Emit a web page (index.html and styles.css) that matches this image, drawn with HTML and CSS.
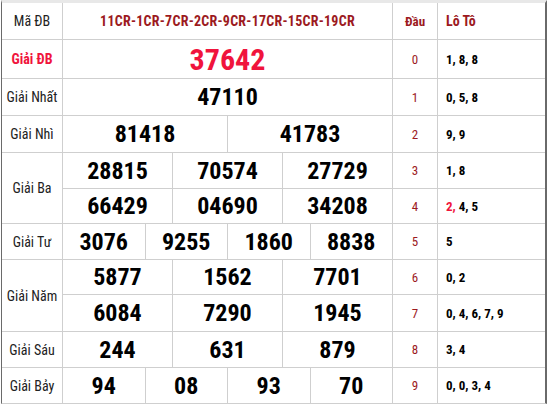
FILE: index.html
```html
<!DOCTYPE html>
<html lang="vi">

<head>
    <meta charset="utf-8">
    <meta name="viewport" content="width=device-width, initial-scale=1.0">
    <title>Kết quả xổ số</title>
    <link rel="stylesheet" href="styles.css">
</head>

<body>
    <main class="board">
        <!-- header -->
        <div class="label">Mã ĐB</div>
        <div class="code span12">11CR-1CR-7CR-2CR-9CR-17CR-15CR-19CR</div>
        <div class="head_dau">Đầu</div>
        <div class="head_loto">Lô Tô</div>

        <div class="label label_db">Giải ĐB</div>
        <div class="num num_db span12">37642</div>
        <div class="dau">0</div>
        <div class="loto">1, 8, 8</div>

        <div class="label">Giải Nhất</div>
        <div class="num span12">47110</div>
        <div class="dau">1</div>
        <div class="loto">0, 5, 8</div>

        <div class="label">Giải Nhì</div>
        <div class="num span6">81418</div>
        <div class="num span6">41783</div>
        <div class="dau">2</div>
        <div class="loto">9, 9</div>

        <div class="label rows2">Giải Ba</div>
        <div class="num span4">28815</div>
        <div class="num span4">70574</div>
        <div class="num span4">27729</div>
        <div class="dau">3</div>
        <div class="loto">1, 8</div>
        <div class="num span4">66429</div>
        <div class="num span4">04690</div>
        <div class="num span4">34208</div>
        <div class="dau">4</div>
        <div class="loto"><p><span class="hot">2,</span> 4, 5</p></div>

        <div class="label">Giải Tư</div>
        <div class="num span3">3076</div>
        <div class="num span3">9255</div>
        <div class="num span3">1860</div>
        <div class="num span3">8838</div>
        <div class="dau">5</div>
        <div class="loto">5</div>

        <div class="label rows2">Giải Năm</div>
        <div class="num span4">5877</div>
        <div class="num span4">1562</div>
        <div class="num span4">7701</div>
        <div class="dau">6</div>
        <div class="loto">0, 2</div>
        <div class="num span4">6084</div>
        <div class="num span4">7290</div>
        <div class="num span4">1945</div>
        <div class="dau">7</div>
        <div class="loto">0, 4, 6, 7, 9</div>

        <div class="label">Giải Sáu</div>
        <div class="num span4">244</div>
        <div class="num span4">631</div>
        <div class="num span4">879</div>
        <div class="dau">8</div>
        <div class="loto">3, 4</div>

        <div class="label">Giải Bảy</div>
        <div class="num span3">94</div>
        <div class="num span3">08</div>
        <div class="num span3">93</div>
        <div class="num span3">70</div>
        <div class="dau">9</div>
        <div class="loto">0, 0, 3, 4</div>
    </main>
</body></html>
```

FILE: styles.css
```css
* {
    margin: 0;
    padding: 0;
    box-sizing: border-box;
}

body {
    width: 547px;
    height: 405px;
    background: #fff;
    font-family: "Roboto Condensed", Roboto, "Liberation Sans", sans-serif;
    font-stretch: 80%;
    color: #222;
    overflow: hidden;
}

.board {
    display: grid;
    grid-template-columns: 60px repeat(12, 1fr) 44px 107px;
    grid-template-rows: 36px 38px 36px 36px 35px 34px 35px 34px 36px 35px 35px;
    gap: 1px;
    margin-left: 1px;
    width: 546px;
    background: #cfcfcf;
    border-top: 3px solid #e8e8e8;
    border-bottom: 1px solid #cfcfcf;
    border-left: 1px solid #6a6a6a;
    border-right: 2px solid #6a6a6a;
}

.board > div {
    background: #fff;
    display: flex;
    align-items: center;
    justify-content: center;
}

.span12 { grid-column: span 12; }
.span6 { grid-column: span 6; }
.span4 { grid-column: span 4; }
.span3 { grid-column: span 3; }
.rows2 { grid-row: span 2; }

.label {
    font-size: 14px;
}

.label_db {
    color: #f0143c;
    font-weight: 700;
}

.code {
    color: #9c1a1e;
    font-weight: 700;
    font-size: 14px;
    letter-spacing: 0.25px;
}

.head_dau {
    color: #9c1a1e;
    font-weight: 700;
    font-size: 13px;
}

.board > .head_loto {
    color: #9c1a1e;
    font-weight: 700;
    font-size: 14px;
    justify-content: flex-start;
    padding-left: 8px;
}

.num {
    font-size: 24px;
    font-weight: 700;
    color: #000;
}

.num_db {
    font-size: 30px;
    color: #f0143c;
}

.dau {
    color: #9c1a1e;
    font-size: 13px;
}

.board > .loto {
    justify-content: flex-start;
    padding-left: 8px;
    font-size: 13px;
    font-weight: 700;
    color: #000;
}

.hot {
    color: #f0143c;
}
```
